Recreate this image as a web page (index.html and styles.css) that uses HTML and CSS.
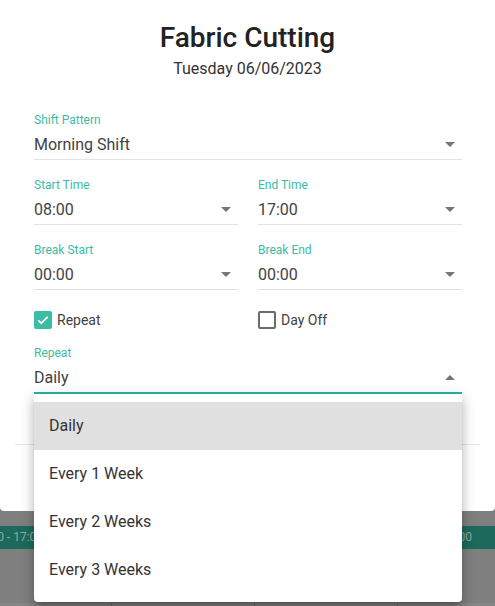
FILE: index.html
```html
<!DOCTYPE html>
<html lang="en">

<head>
    <meta charset="UTF-8" />
    <title>Fabric Cutting - Shift</title>
    <link rel="stylesheet" href="styles.css">
</head>

<body>
    <div id="dialog">
        <h1 class="title">Fabric Cutting</h1>
        <p class="subtitle">Tuesday 06/06/2023</p>

        <form id="shiftForm">
            <div class="field">
                <div class="field-label">Shift Pattern</div>
                <div class="select">
                    <span>Morning Shift</span>
                    <span class="caret"></span>
                </div>
            </div>

            <div class="row">
                <div class="field">
                    <div class="field-label">Start Time</div>
                    <div class="select">
                        <span>08:00</span>
                        <span class="caret"></span>
                    </div>
                </div>
                <div class="field">
                    <div class="field-label">End Time</div>
                    <div class="select">
                        <span>17:00</span>
                        <span class="caret"></span>
                    </div>
                </div>
            </div>

            <div class="row">
                <div class="field">
                    <div class="field-label">Break Start</div>
                    <div class="select">
                        <span>00:00</span>
                        <span class="caret"></span>
                    </div>
                </div>
                <div class="field">
                    <div class="field-label">Break End</div>
                    <div class="select">
                        <span>00:00</span>
                        <span class="caret"></span>
                    </div>
                </div>
            </div>

            <div class="row checks">
                <label class="check">
                    <span class="box checked">
                        <svg width="14" height="14" viewBox="0 0 24 24">
                            <path d="M4 12.5l5 5L20 6.5" fill="none" stroke="#fff" stroke-width="3" />
                        </svg>
                    </span>
                    Repeat
                </label>
                <label class="check">
                    <span class="box"></span>
                    Day Off
                </label>
            </div>

            <div class="field open">
                <div class="field-label">Repeat</div>
                <div class="select">
                    <span>Daily</span>
                    <span class="caret up"></span>
                </div>

                <ul class="menu">
                    <li class="active">Daily</li>
                    <li>Every 1 Week</li>
                    <li>Every 2 Weeks</li>
                    <li>Every 3 Weeks</li>
                </ul>
            </div>
        </form>

        <div class="divider"></div>
        <div class="actions"></div>
    </div>

    <div class="calendar">
        <div class="event-bar">
            <div class="cell">08:00 - 17:00</div>
            <div class="cell">08:00 - 17:00</div>
            <div class="cell">08:00 - 17:00</div>
            <div class="cell">08:00 - 17:00</div>
        </div>
        <div class="grid-strip">
            <div class="cell"></div>
            <div class="cell"></div>
            <div class="cell"></div>
            <div class="cell"></div>
        </div>
    </div>
</body>

</html>
```

FILE: styles.css
```css
* {
    box-sizing: border-box;
    margin: 0;
    padding: 0;
}

body {
    font-family: Roboto, 'Liberation Sans', sans-serif;
    background-color: #7f7f7f;
    height: 606px;
    overflow: hidden;
}

#dialog {
    background-color: #ffffff;
    height: 511px;
    border-radius: 0 0 4px 4px;
    padding-top: 20px;
}

.title {
    font-size: 28px;
    font-weight: 500;
    line-height: 36px;
    text-align: center;
    color: #222222;
}

.subtitle {
    font-size: 16px;
    line-height: 24px;
    margin-top: 1px;
    text-align: center;
    color: #333333;
}

#shiftForm {
    padding: 0 33px 0 34px;
    margin-top: 31px;
}

.row {
    display: flex;
    gap: 20px;
}

.row .field {
    flex: 1;
}

.field {
    margin-bottom: 17px;
}

.field-label {
    font-size: 12px;
    line-height: 16px;
    color: #3bbca4;
}

.select {
    height: 32px;
    display: flex;
    align-items: center;
    justify-content: space-between;
    padding: 1px 7px 0 0;
    border-bottom: 1px solid #e3e3e3;
    font-size: 16px;
    color: #424242;
}

.caret {
    width: 0;
    height: 0;
    border-left: 5px solid transparent;
    border-right: 5px solid transparent;
    border-top: 5px solid #757575;
}

.caret.up {
    border-top: none;
    border-bottom: 5px solid #757575;
}

.checks {
    height: 26px;
    align-items: center;
    margin-bottom: 12px;
}

.check {
    flex: 1;
    display: flex;
    align-items: center;
    gap: 5px;
    font-size: 14px;
    color: #424242;
}

.box {
    width: 18px;
    height: 18px;
    border: 2px solid #6b6b6b;
    border-radius: 2px;
    display: flex;
    align-items: center;
    justify-content: center;
}

.box.checked {
    border: none;
    background-color: #3bbca4;
}

.open {
    position: relative;
    margin-bottom: 0;
}

.open .select {
    border-bottom: 2px solid #2bb5a0;
    height: 33px;
}

.menu {
    position: absolute;
    top: 100%;
    left: 0;
    right: 0;
    list-style: none;
    background-color: #ffffff;
    padding: 8px 0;
    border-radius: 0 0 4px 4px;
    box-shadow: 0 5px 5px -3px rgba(0, 0, 0, 0.2), 0 8px 10px 1px rgba(0, 0, 0, 0.14), 0 3px 14px 2px rgba(0, 0, 0, 0.12);
    z-index: 2;
}

.menu li {
    height: 48px;
    line-height: 48px;
    padding-left: 15px;
    font-size: 16px;
    color: #333333;
}

.menu li.active {
    background-color: #e0e0e0;
}

.divider {
    height: 1px;
    background-color: #e6e6e6;
    margin: 50px 15px 0;
}

.calendar {
    margin-top: 15px;
    margin-left: -31px;
}

.event-bar,
.grid-strip {
    display: flex;
}

.cell {
    width: 143px;
    flex-shrink: 0;
}

.event-bar {
    height: 23px;
    background-color: #1d6a5c;
}

.event-bar .cell {
    padding-left: 5px;
    font-size: 12px;
    line-height: 23px;
    color: #8fa9a3;
}

.grid-strip {
    margin-top: 54px;
    height: 3px;
    background-color: #858585;
}

.grid-strip .cell {
    border-right: 1px solid #6e6e6e;
}
```
